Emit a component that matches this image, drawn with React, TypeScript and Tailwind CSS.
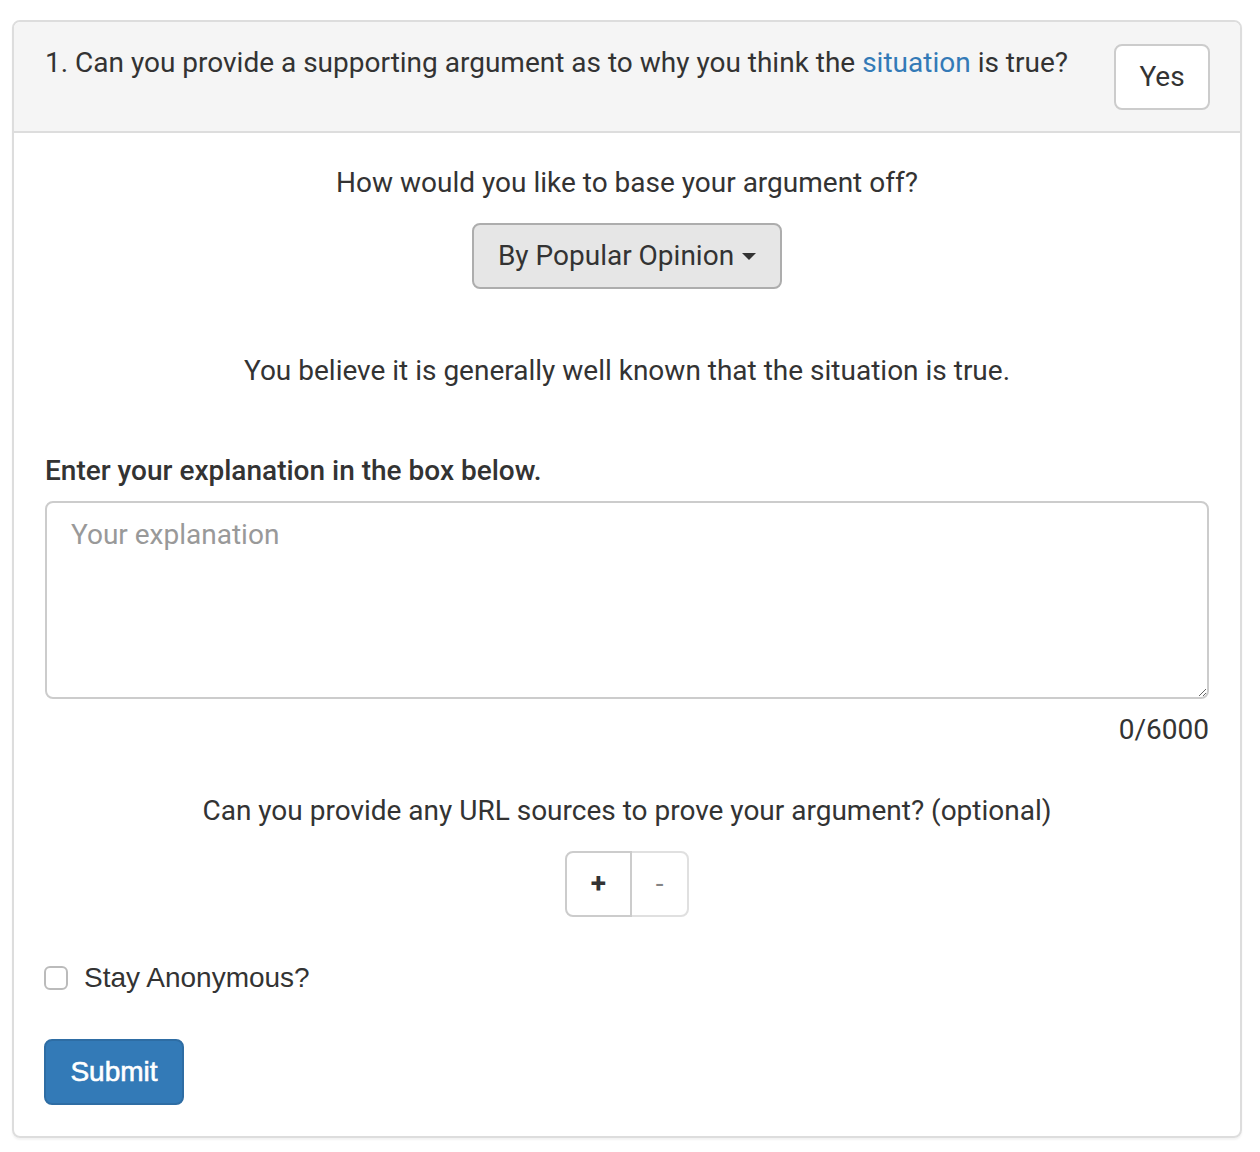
import React from 'react';

const roboto = { fontFamily: 'Roboto, "Helvetica Neue", Arial, sans-serif' };
const helvetica = { fontFamily: '"Liberation Sans", Arial, sans-serif' };

export default function App() {
    return (
        <div className="min-h-[1152px] bg-white pt-[20px] pl-[12px] text-[#333]" style={roboto}>
            <div className="w-[1230px] rounded-[8px] border-2 border-[#ddd] shadow-[0_2px_2px_rgba(0,0,0,0.05)]">
                {/* Heading */}
                <div className="flex items-start justify-between rounded-t-[6px] border-b-2 border-[#ddd] bg-[#f5f5f5] pt-[21px] pr-[30px] pb-[21px] pl-[31px]">
                    <p className="text-[28px] leading-[40px]">
                        1. Can you provide a supporting argument as to why you think the{' '}
                        <a href="#" className="text-[#337ab7]">
                            situation
                        </a>{' '}
                        is true?
                    </p>
                    <button
                        type="button"
                        className="mt-px h-[66px] w-[96px] rounded-[8px] border-2 border-[#ccc] bg-white text-[28px] leading-[40px]"
                    >
                        Yes
                    </button>
                </div>

                {/* Body */}
                <div className="px-[31px] pt-[30px] pb-[31px]">
                    <div className="flex flex-col items-center">
                        <p className="text-[28px] leading-[40px]">How would you like to base your argument off?</p>
                        <button
                            type="button"
                            className="mt-[20px] flex h-[66px] items-center rounded-[8px] border-2 border-[#adadad] bg-[#e6e6e6] px-[24px] text-[28px]"
                        >
                            By Popular Opinion
                            <span className="ml-[8px] inline-block h-0 w-0 border-x-[7px] border-t-[7px] border-x-transparent border-t-[#333]" />
                        </button>
                        <p className="mt-[62px] text-[28px] leading-[40px]">
                            You believe it is generally well known that the situation is true.
                        </p>
                    </div>

                    <p className="mt-[60px] text-[28px] leading-[40px] font-medium">
                        Enter your explanation in the box below.
                    </p>
                    <textarea
                        placeholder="Your explanation"
                        className="mt-[10px] block h-[198px] w-full rounded-[8px] border-2 border-[#ccc] px-[24px] py-[12px] text-[28px] leading-[40px] text-[#555] placeholder:text-[#999]"
                    />
                    <p className="mt-[11px] text-right text-[28px] leading-[40px]">0/6000</p>

                    <div className="mt-[41px] flex flex-col items-center">
                        <p className="text-[28px] leading-[40px]">
                            Can you provide any URL sources to prove your argument? (optional)
                        </p>
                        <div className="mt-[20px] flex">
                            <button
                                type="button"
                                className="h-[66px] w-[67px] rounded-l-[8px] border-2 border-[#ccc] bg-white text-[28px] font-bold"
                            >
                                +
                            </button>
                            <button
                                type="button"
                                className="-ml-[2px] h-[66px] w-[59px] rounded-r-[8px] border-2 border-[#ccc] bg-white text-[28px] opacity-60"
                            >
                                -
                            </button>
                        </div>
                    </div>

                    <label className="mt-[41px] flex items-center gap-[16px]" style={helvetica}>
                        <span className="ml-[-1px] h-[24px] w-[24px] rounded-[6px] border-2 border-[#bbb] bg-white" />
                        <span className="text-[28px] leading-[40px]">Stay Anonymous?</span>
                    </label>

                    <button
                        type="button"
                        className="mt-[41px] ml-[-1px] h-[66px] w-[140px] rounded-[8px] border-2 border-[#2e6da4] bg-[#337ab7] text-[28px] text-white [-webkit-text-stroke:0.6px_white]"
                        style={helvetica}
                    >
                        Submit
                    </button>
                </div>
            </div>
        </div>
    );
}
